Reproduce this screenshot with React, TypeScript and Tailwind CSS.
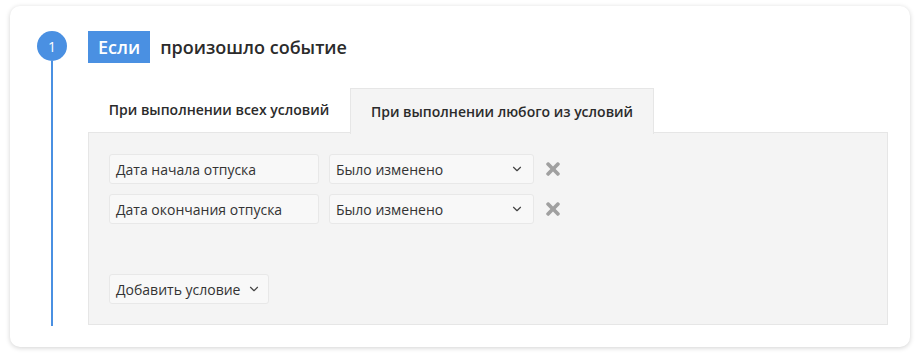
import React from "react";
import { FaTimes } from "react-icons/fa";
import { ChevronDown } from "lucide-react";

const conditions = [
  { field: "Дата начала отпуска", op: "Было изменено" },
  { field: "Дата окончания отпуска", op: "Было изменено" },
];

const App = () => {
  return (
    <div
      className="w-[920px] h-[360px] bg-white pt-[6px] pl-[10px]"
      style={{ fontFamily: "'Open Sans', 'Noto Sans', sans-serif" }}
    >
      <div className="w-[900px] h-[341px] bg-white rounded-[10px] shadow-[0_1px_5px_rgba(0,0,0,0.18)] flex pt-[25px] pl-[27px]">
        {/* step marker */}
        <div className="flex flex-col items-center w-[30px] h-[295px]">
          <div className="w-[30px] h-[30px] shrink-0 rounded-full bg-[#4a90e2] text-white text-[14px] flex items-center justify-center">
            1
          </div>
          <div className="w-[2px] flex-1 bg-[#4a90e2]" />
        </div>

        <div className="ml-[21px] flex flex-col w-[800px]">
          <div className="flex items-center h-[32px]">
            <span className="bg-[#4a90e2] text-white text-[18px] font-semibold h-[32px] px-[10px] flex items-center">
              Если
            </span>
            <span className="ml-[10px] text-[18px] text-[#2b2b2b] font-semibold">произошло событие</span>
          </div>

          {/* tabs */}
          <div className="mt-[24px] flex items-end h-[46px] w-[800px]">
            <div className="h-[46px] w-[262px] flex items-center justify-center text-[14px] text-[#2b2b2b] font-semibold border-b border-[#e6e6e6]">
              При выполнении всех условий
            </div>
            <div className="h-[46px] w-[304px] flex items-center justify-center text-[14px] text-[#2b2b2b] font-semibold bg-[#f4f4f4] border border-b-0 border-[#e6e6e6] relative top-[1px]">
              При выполнении любого из условий
            </div>
            <div className="flex-1 border-b border-[#e6e6e6]" />
          </div>

          <div className="w-[800px] h-[192px] bg-[#f4f4f4] border border-t-0 border-[#e6e6e6] pt-[21px] px-[20px]">
            <div className="flex flex-col gap-[10px]">
              {conditions.map((c, i) => (
                <div key={i} className="flex items-center">
                  <div className="w-[210px] h-[30px] bg-[#f8f8f8] border border-[#e8e8e8] rounded-[3px] flex items-center px-[6px] text-[14px] text-[#333]">
                    {c.field}
                  </div>
                  <div className="ml-[10px] w-[205px] h-[30px] bg-[#f8f8f8] border border-[#e8e8e8] rounded-[3px] flex items-center justify-between pl-[6px] pr-[9px] text-[14px] text-[#333]">
                    {c.op}
                    <ChevronDown size={14} strokeWidth={2} className="text-[#444]" />
                  </div>
                  <FaTimes className="ml-[9px] text-[#a0a0a0]" size={20} />
                </div>
              ))}
            </div>

            <div className="mt-[50px] w-[160px] h-[30px] bg-[#f8f8f8] border border-[#e8e8e8] rounded-[3px] flex items-center pl-[6px] text-[14px] text-[#333]">
              Добавить условие
              <ChevronDown size={14} strokeWidth={2} className="ml-[7px] text-[#444]" />
            </div>
          </div>
        </div>
      </div>
    </div>
  );
};

export default App;
